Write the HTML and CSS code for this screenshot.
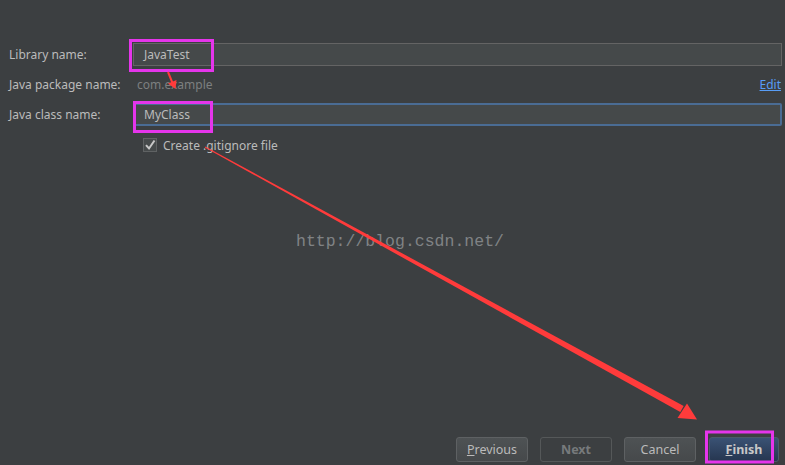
FILE: index.html
```html
<!DOCTYPE html>
<html>
<head>
<meta charset="utf-8">
<link rel="stylesheet" href="styles.css">
</head>
<body>
<div class="page">
  <div class="form">
    <div class="row row-field">
      <span class="label">Library name:</span>
      <div class="field">JavaTest</div>
    </div>
    <div class="row row-text">
      <span class="label">Java package name:</span>
      <div class="pkg">
        <span class="muted">com.example</span>
        <span class="link">Edit</span>
      </div>
    </div>
    <div class="row row-field">
      <span class="label">Java class name:</span>
      <div class="field focused">MyClass</div>
    </div>
    <div class="row row-check">
      <span></span>
      <label class="check"><span class="box"><svg width="12" height="12" viewBox="0 0 12 12"><path d="M2 6.2 L5 9.5 L10.5 1.5" fill="none" stroke="#c8c8c8" stroke-width="2"/></svg></span>Create .gitignore file</label>
    </div>
  </div>

  <div class="buttons">
    <button class="btn"><u>P</u>revious</button>
    <button class="btn disabled">Next</button>
    <button class="btn cancel">Cancel</button>
    <button class="btn default"><u>F</u>inish</button>
  </div>

  <div class="watermark">http://blog.csdn.net/</div>

  <svg class="annot" width="785" height="465" viewBox="0 0 785 465">
    <rect x="130.5" y="40.5" width="82" height="30" fill="none" stroke="#e535eb" stroke-width="3"/>
    <rect x="134.5" y="102.5" width="77" height="29" fill="none" stroke="#e535eb" stroke-width="3"/>
    <rect x="706.5" y="432" width="66" height="30" fill="none" stroke="#e535eb" stroke-width="3"/>
    <line x1="168" y1="72" x2="172.5" y2="83" stroke="#ff3b3b" stroke-width="2"/>
    <polygon points="168,83.5 176.5,80 175.5,89" fill="#ff3b3b"/>
    <polygon points="205.24,146.56 204.76,147.44 680.3,412.1 683.7,405.9" fill="#ff3b3b"/>
    <polygon points="677.5,418 687,403.5 697,419.5" fill="#ff3b3b"/>
  </svg>
</div>
</body>
</html>
```
FILE: styles.css
```css
html, body {
  margin: 0;
  padding: 0;
  background: #3c3f41;
}
.page {
  position: relative;
  width: 785px;
  height: 465px;
  display: flex;
  flex-direction: column;
  font-family: "Noto Sans", "Open Sans", sans-serif;
  font-size: 12px;
  color: #bbbbbb;
  overflow: hidden;
}
.form {
  padding: 43px 3px 0 9px;
  display: flex;
  flex-direction: column;
}
.row {
  display: grid;
  grid-template-columns: 124px 1fr;
  align-items: center;
}
.row-field { height: 23px; }
.row-text { height: 37px; }
.row-check { height: 18px; margin-top: 10px; }
.label {
  color: #bbbbbb;
  white-space: nowrap;
}
.field {
  height: 23px;
  box-sizing: border-box;
  border: 1px solid #646464;
  background: #45494a;
  padding-left: 10px;
  display: flex;
  align-items: center;
  color: #bbbbbb;
}
.field.focused {
  border: 2px solid #4a6c94;
  border-radius: 2px;
  padding-left: 9px;
}
.pkg {
  display: flex;
  justify-content: space-between;
  align-items: center;
  padding-left: 4px;
}
.muted { color: #7d7f80; }
.link {
  color: #589df6;
  text-decoration: underline;
  margin-right: 1px;
}
.check {
  display: flex;
  align-items: center;
  gap: 6px;
  margin-left: 10px;
  color: #bbbbbb;
}
.box {
  width: 14px;
  height: 14px;
  box-sizing: border-box;
  border: 1px solid #5f6263;
  background: #464a4b;
  display: flex;
  align-items: center;
  justify-content: center;
}
.buttons {
  margin-top: auto;
  display: flex;
  justify-content: flex-end;
  gap: 12px;
  padding: 0 6px 3px 0;
}
.btn {
  width: 72px;
  height: 25px;
  box-sizing: border-box;
  border: 1px solid #5e6163;
  border-radius: 3px;
  background: linear-gradient(#4e5254, #46494b);
  color: #bbbbbb;
  font-family: "Noto Sans", "Open Sans", sans-serif;
  font-size: 12.5px;
  padding: 0;
}
.btn.cancel { margin-right: 1px; }
.btn.disabled {
  background: transparent;
  color: #777a7c;
  font-weight: bold;
  border-color: #555859;
}
.btn.default {
  width: 70px;
  background: linear-gradient(#3a5274, #263650);
  border-color: #4c5a6a;
  font-weight: bold;
  color: #c8c8c8;
}
.watermark {
  position: absolute;
  left: 296px;
  top: 232px;
  font-family: "Liberation Mono", monospace;
  font-size: 16.5px;
  color: #808385;
}
.annot {
  position: absolute;
  left: 0;
  top: 0;
  pointer-events: none;
}
```
